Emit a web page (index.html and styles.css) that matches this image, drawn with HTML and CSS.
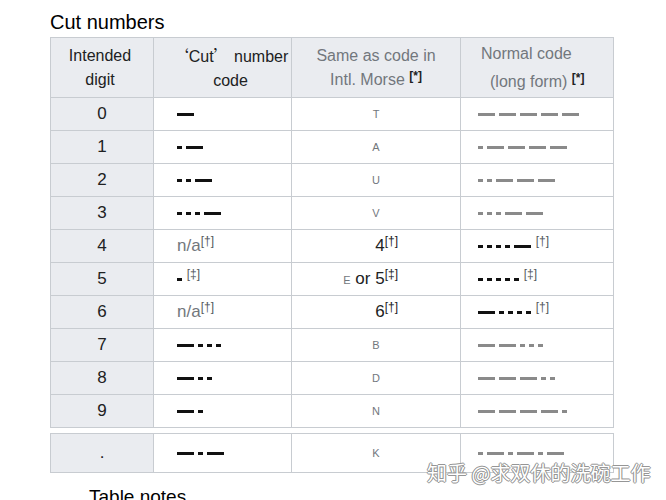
FILE: index.html
```html
<!DOCTYPE html>
<html lang="en">
<head>
<meta charset="utf-8">
<title>Cut numbers</title>
<link rel="stylesheet" href="styles.css">
</head>
<body>
<div class="page">
  <h2 class="title">Cut numbers</h2>
  <table class="cut">
    <colgroup><col class="c1"><col class="c2"><col class="c3"><col class="c4"></colgroup>
    <thead>
      <tr>
        <th class="h1">Intended<br>digit</th>
        <th class="h2"><span class="q">‘</span>Cut<span class="q">’</span> number<br>code</th>
        <th class="h3">Same as code in<br>Intl. Morse <sup class="star">[*]</sup></th>
        <th class="h4"><span class="l1">Normal code</span><span class="l2">(long form) <sup class="star">[*]</sup></span></th>
      </tr>
    </thead>
    <tbody>
      <tr><th>0</th><td class="code"><span class="m k"><i class="D"></i></span></td><td class="let">T</td><td class="norm"><span class="m g"><i class="D"></i><i class="D"></i><i class="D"></i><i class="D"></i><i class="D"></i></span></td></tr>
      <tr><th>1</th><td class="code"><span class="m k"><i class="d"></i><i class="D"></i></span></td><td class="let">A</td><td class="norm"><span class="m g"><i class="d"></i><i class="D"></i><i class="D"></i><i class="D"></i><i class="D"></i></span></td></tr>
      <tr><th>2</th><td class="code"><span class="m k"><i class="d"></i><i class="d"></i><i class="D"></i></span></td><td class="let">U</td><td class="norm"><span class="m g"><i class="d"></i><i class="d"></i><i class="D"></i><i class="D"></i><i class="D"></i></span></td></tr>
      <tr><th>3</th><td class="code"><span class="m k"><i class="d"></i><i class="d"></i><i class="d"></i><i class="D"></i></span></td><td class="let">V</td><td class="norm"><span class="m g"><i class="d"></i><i class="d"></i><i class="d"></i><i class="D"></i><i class="D"></i></span></td></tr>
      <tr><th>4</th><td class="code"><span class="na">n/a</span><sup class="ref g">[†]</sup></td><td class="alt"><span class="big">4</span><sup class="ref">[†]</sup></td><td class="norm"><span class="m k"><i class="d"></i><i class="d"></i><i class="d"></i><i class="d"></i><i class="D"></i></span> <sup class="ref g">[†]</sup></td></tr>
      <tr><th>5</th><td class="code"><span class="m k"><i class="d"></i></span> <sup class="ref g">[‡]</sup></td><td class="alt"><span class="small">E</span> <span class="big">or 5</span><sup class="ref">[‡]</sup></td><td class="norm"><span class="m k"><i class="d"></i><i class="d"></i><i class="d"></i><i class="d"></i><i class="d"></i></span> <sup class="ref g">[‡]</sup></td></tr>
      <tr><th>6</th><td class="code"><span class="na">n/a</span><sup class="ref g">[†]</sup></td><td class="alt"><span class="big">6</span><sup class="ref">[†]</sup></td><td class="norm"><span class="m k"><i class="D"></i><i class="d"></i><i class="d"></i><i class="d"></i><i class="d"></i></span> <sup class="ref g">[†]</sup></td></tr>
      <tr><th>7</th><td class="code"><span class="m k"><i class="D"></i><i class="d"></i><i class="d"></i><i class="d"></i></span></td><td class="let">B</td><td class="norm"><span class="m g"><i class="D"></i><i class="D"></i><i class="d"></i><i class="d"></i><i class="d"></i></span></td></tr>
      <tr><th>8</th><td class="code"><span class="m k"><i class="D"></i><i class="d"></i><i class="d"></i></span></td><td class="let">D</td><td class="norm"><span class="m g"><i class="D"></i><i class="D"></i><i class="D"></i><i class="d"></i><i class="d"></i></span></td></tr>
      <tr><th>9</th><td class="code"><span class="m k"><i class="D"></i><i class="d"></i></span></td><td class="let">N</td><td class="norm"><span class="m g"><i class="D"></i><i class="D"></i><i class="D"></i><i class="D"></i><i class="d"></i></span></td></tr>
      <tr class="gap"><td colspan="4"></td></tr>
      <tr class="dot"><th>.</th><td class="code"><span class="m k"><i class="D"></i><i class="d"></i><i class="D"></i></span></td><td class="let">K</td><td class="norm"><span class="m g"><i class="d"></i><i class="D"></i><i class="d"></i><i class="D"></i><i class="d"></i><i class="D"></i></span></td></tr>
    </tbody>
  </table>
  <h3 class="notes">Table notes</h3>
</div>
<div class="watermark">知乎 @求双休的洗碗工作</div>
</body>
</html>
```

FILE: styles.css
```css
html, body {
  margin: 0;
  padding: 0;
  background: #ffffff;
}
body {
  font-family: "Liberation Sans", Arial, "Noto Sans CJK SC", sans-serif;
  color: #202122;
  position: relative;
  width: 666px;
  height: 500px;
  overflow: hidden;
}
.page {
  padding-left: 50px;
}
.title {
  margin: 0;
  padding-top: 10px;
  font-size: 20px;
  line-height: 24px;
  font-weight: normal;
  color: #000;
}
.cut {
  margin-top: 3px;
  border-collapse: collapse;
  table-layout: fixed;
  width: 563px;
  font-size: 17px;
}
.c1 { width: 103px; }
.c2 { width: 138px; }
.c3 { width: 169px; }
.c4 { width: 153px; }
.cut th, .cut td {
  border: 1px solid #c8ccd1;
  padding: 0;
  height: 32px;
  vertical-align: middle;
}
.cut thead th {
  background: #eaecf0;
  height: 59px;
  font-size: 16px;
  line-height: 24px;
  font-weight: normal;
  text-align: center;
  vertical-align: middle;
  color: #202122;
}
.cut thead .h1 {
  padding-right: 4px;
}
.cut thead .h2 {
  padding-left: 16px;
}
.q {
  font-family: "Noto Sans CJK SC", sans-serif;
}
.cut thead .h3,
.cut thead .h4 {
  color: #72777d;
}
.cut thead .h4 {
  text-align: left;
}
.l1 {
  display: block;
  padding-left: 20px;
}
.l2 {
  display: block;
  padding-left: 29px;
  margin-top: 4px;
}
.star {
  font-size: 12px;
  font-weight: bold;
  color: #202122;
  vertical-align: 5px;
  line-height: 0;
}
.cut tbody th {
  background: #eaecf0;
  font-weight: normal;
  text-align: center;
  color: #202122;
}
.code {
  padding-left: 23px !important;
}
.norm {
  padding-left: 17px !important;
}
.let {
  text-align: center;
  font-size: 11px;
  color: #72777d;
}
.alt {
  text-align: right;
  padding-right: 62px !important;
}
.big {
  font-size: 17px;
  color: #202122;
}
.small {
  font-size: 11px;
  color: #72777d;
}
.na {
  color: #72777d;
}
.ref {
  font-size: 12px;
  line-height: 0;
  vertical-align: 6px;
  color: #202122;
}
.ref.g {
  color: #54595d;
}
.m {
  display: inline-flex;
  align-items: center;
  gap: 4px;
  vertical-align: middle;
}
.m i {
  display: block;
  height: 3px;
}
.m .d { width: 5px; }
.m .D { width: 17px; }
.m.k i { background: #111111; }
.m.g i { background: #8a8a8a; }
.gap td {
  height: 5px;
  background: #ffffff;
  border-left: none;
  border-right: none;
}
.dot th, .dot td {
  height: 38px;
}
.notes {
  margin: 12px 0 0 39px;
  font-size: 19px;
  line-height: 24px;
  font-weight: normal;
  color: #000;
}
.watermark {
  position: absolute;
  left: 427px;
  top: 461px;
  font-family: "Noto Sans CJK SC", sans-serif;
  font-size: 20px;
  line-height: 24px;
  color: #ffffff;
  text-shadow: 0 0 1px #777, 1px 0 0 #999, -1px 0 0 #999, 0 1px 0 #999, 0 -1px 0 #999;
  white-space: nowrap;
}
```
